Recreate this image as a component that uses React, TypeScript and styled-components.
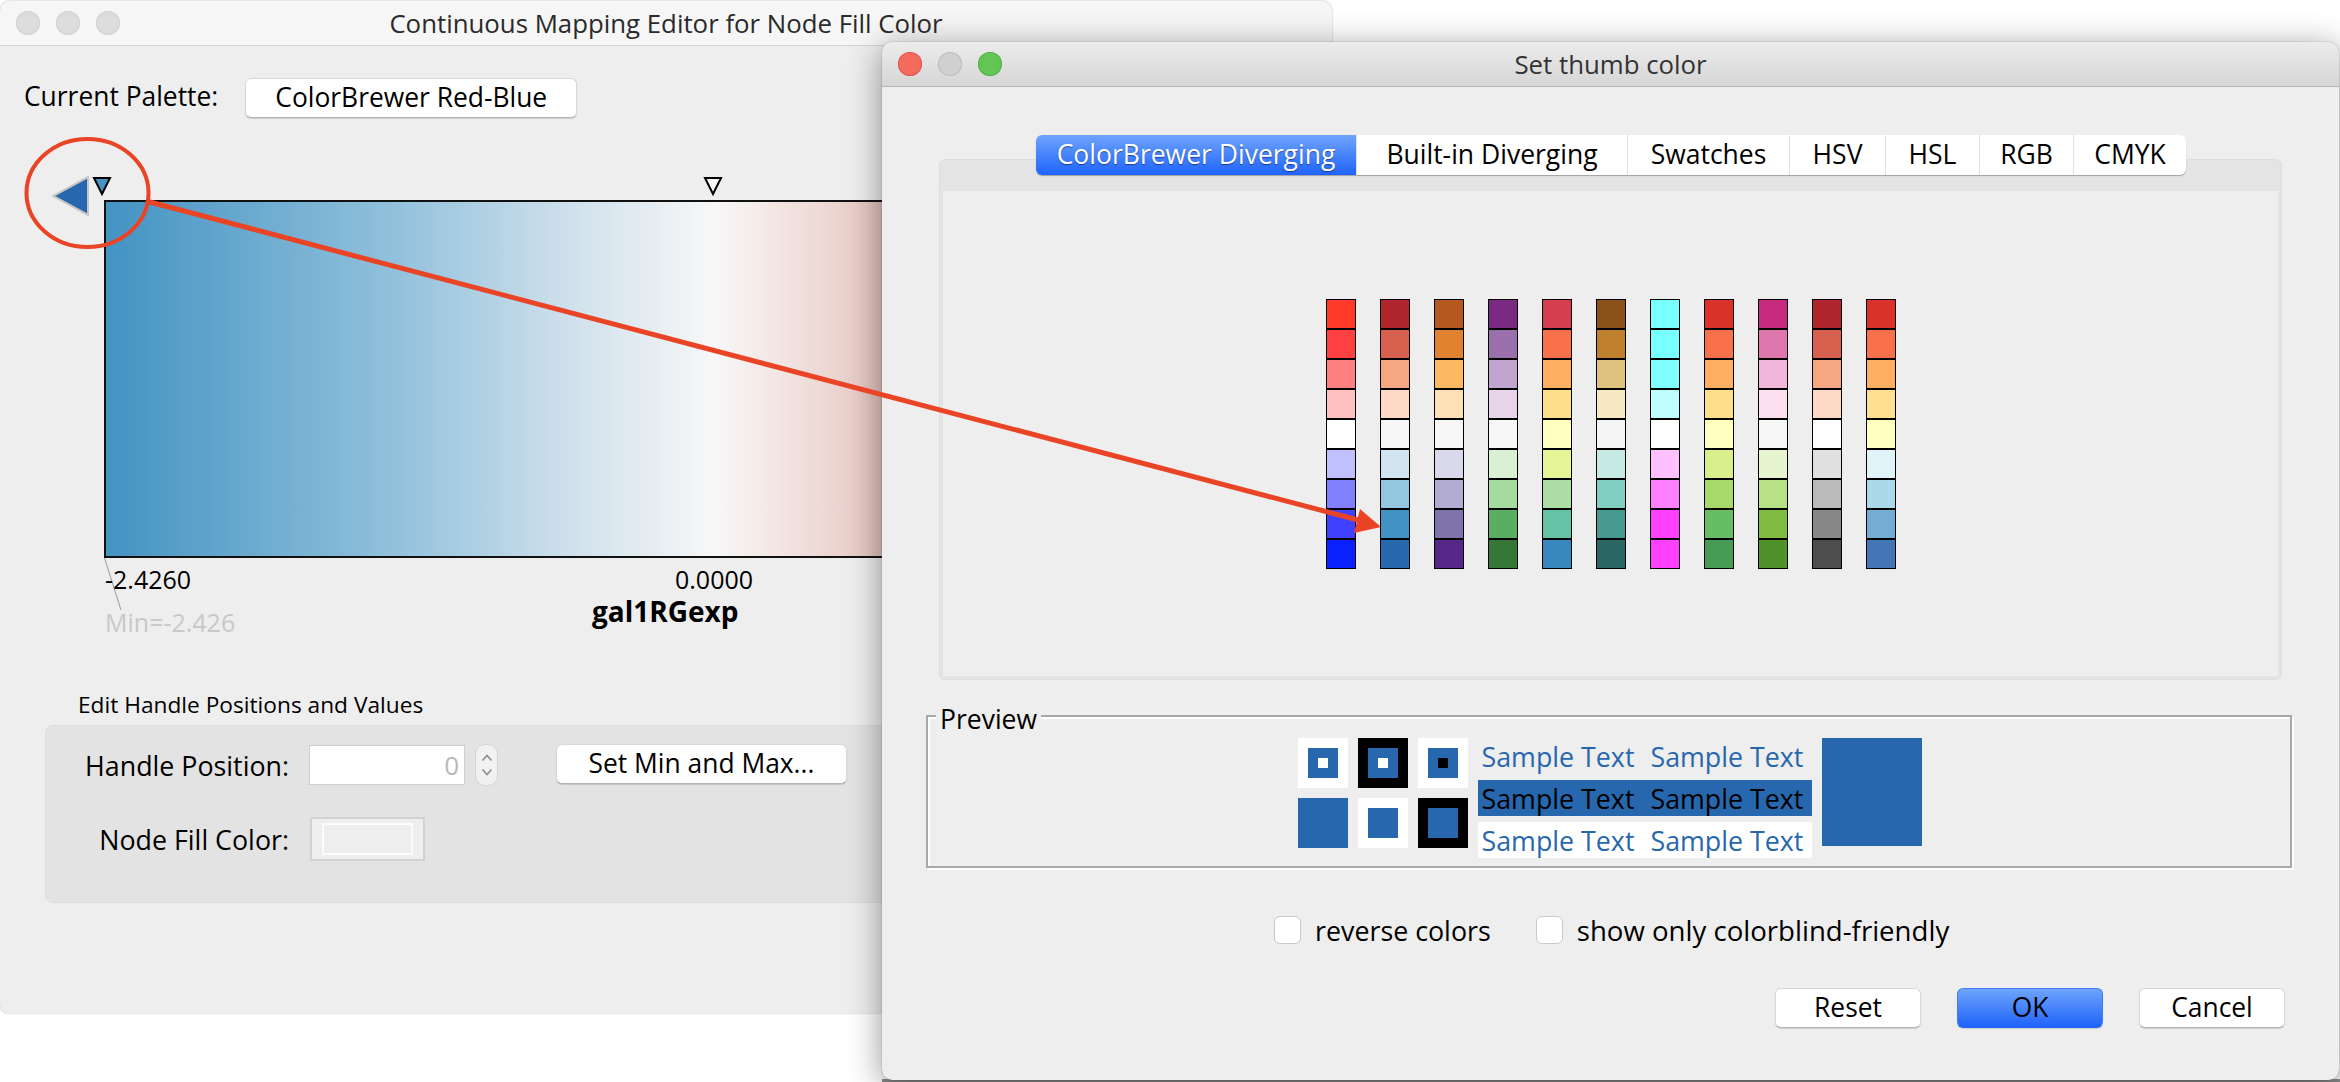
import React from "react";
import styled, { createGlobalStyle } from "styled-components";

const GlobalStyle = createGlobalStyle`
  html, body {
    margin: 0;
    padding: 0;
    background: #fff;
    overflow: hidden;
  }
  body {
    font-family: "Open Sans", "Noto Sans", sans-serif;
    color: #000;
  }
`;

const Desktop = styled.div`
  position: relative;
  width: 2340px;
  height: 1082px;
  overflow: hidden;
  background: #fff;
`;

const BackdropStrip = styled.div`
  position: absolute;
  left: 882px;
  right: 0;
  bottom: 0;
  height: 3px;
  background: #8c8c8c;
`;

const EditorWindow = styled.div`
  position: absolute;
  left: 0;
  top: 1px;
  width: 1332px;
  height: 1012px;
  display: flex;
  flex-direction: column;
  background: #eeeeee;
  border-radius: 10px 10px 8px 8px;
  box-shadow: 0 0 2px rgba(0, 0, 0, 0.35);
  overflow: hidden;
`;

const DialogWindow = styled.div`
  position: absolute;
  left: 882px;
  top: 42px;
  width: 1457px;
  height: 1038px;
  display: flex;
  flex-direction: column;
  background: #eeeeee;
  border-radius: 10px;
  box-shadow: 0 0 1px rgba(0, 0, 0, 0.6), 0 6px 34px rgba(0, 0, 0, 0.42);
`;

const TitleBar = styled.div<{ $active?: boolean }>`
  position: relative;
  flex: none;
  height: 44px;
  display: flex;
  align-items: center;
  justify-content: center;
  background: ${(p) =>
    p.$active ? "linear-gradient(#ececec, #d6d6d6)" : "#f6f6f6"};
  border-bottom: 1px solid ${(p) => (p.$active ? "#b5b5b5" : "#d4d4d4")};
  border-radius: 10px 10px 0 0;
  font-size: 25.8px;
  color: ${(p) => (p.$active ? "#333" : "#2a2a2a")};
`;

const Lights = styled.div`
  position: absolute;
  left: 16px;
  top: 10px;
  display: flex;
  gap: 16px;
`;

const Light = styled.span<{ $color: string; $edge: string }>`
  width: 24px;
  height: 24px;
  border-radius: 50%;
  background: ${(p) => p.$color};
  box-shadow: inset 0 0 0 1px ${(p) => p.$edge};
`;

const EditorBody = styled.div`
  flex: 1;
  display: flex;
  flex-direction: column;
`;

const PaletteRow = styled.div`
  display: flex;
  align-items: center;
  gap: 27px;
  margin: 32px 0 0 24px;
  font-size: 26.4px;
  height: 40px;
  line-height: 36px;
  > span {
    margin-top: -4px;
  }
`;

const MacButton = styled.button<{ $primary?: boolean; $w: number; $h?: number }>`
  flex: none;
  width: ${(p) => p.$w}px;
  height: ${(p) => p.$h ?? 40}px;
  padding: 0 0 3px;
  font: inherit;
  font-size: 26.4px;
  line-height: 34px;
  color: #000;
  border: 1px solid ${(p) => (p.$primary ? "#3f7ff5" : "#d8d8d8")};
  border-bottom-color: ${(p) => (p.$primary ? "#2a68f0" : "#b4b4b4")};
  border-radius: 6px;
  background: ${(p) =>
    p.$primary ? "linear-gradient(#6ea4fb, #1f63fb)" : "#ffffff"};
  box-shadow: 0 1px 1px rgba(0, 0, 0, 0.14);
`;

const GradientArea = styled.div`
  position: relative;
  height: 358px;
  margin: 82px 0 0 104px;
  width: 1228px;
  border: 2px solid #111;
  border-right: none;
  box-sizing: border-box;
  background: linear-gradient(
    90deg,
    #4393c3 0,
    #92c1dc 290px,
    #d1e1ec 470px,
    #f7f7f7 609px,
    #f3e6e3 670px,
    #ecd6d2 725px,
    #e4c2bd 778px,
    #d6604d 1228px
  );
`;

const Handle = styled.svg<{ $left: number }>`
  position: absolute;
  top: -26px;
  left: ${(p) => p.$left}px;
  width: 20px;
  height: 20px;
`;

const SelectedArrow = styled.svg`
  position: absolute;
  top: -26px;
  left: -54px;
  width: 38px;
  height: 40px;
`;

const AxisRow = styled.div`
  position: relative;
  margin-left: 104px;
  height: 38px;
  font-size: 25px;
  line-height: 42px;
`;

const AxisValue = styled.span<{ $left: number }>`
  position: absolute;
  left: ${(p) => p.$left}px;
  top: 0;
  white-space: nowrap;
`;

const TickLine = styled.svg`
  position: absolute;
  left: 0;
  top: 0;
  width: 20px;
  height: 54px;
`;

const CaptionRow = styled.div`
  display: flex;
  margin-left: 105px;
  height: 44px;
`;

const MinLabel = styled.span`
  font-size: 25px;
  color: #c8c8c8;
  line-height: 44px;
  width: 487px;
  padding-top: 4px;
`;

const AttrName = styled.span`
  font-size: 28px;
  font-weight: 700;
  line-height: 38px;
  margin-top: -4px;
`;

const GroupTitle = styled.div`
  margin: 50px 0 0 78px;
  font-size: 22.7px;
  line-height: 30px;
`;

const GroupPanel = styled.div`
  margin: 5px 0 0 45px;
  height: 178px;
  box-sizing: border-box;
  padding: 18px 0 0 0;
  display: flex;
  flex-direction: column;
  gap: 31px;
  background: #e3e3e3;
  border: 1px solid #dcdcdc;
  border-radius: 8px 0 0 8px;
`;

const FieldRow = styled.div`
  display: flex;
  align-items: center;
`;

const FieldLabel = styled.label`
  width: 243px;
  text-align: right;
  font-size: 26.8px;
  flex: none;
`;

const NumberBox = styled.div`
  width: 156px;
  height: 40px;
  margin-left: 20px;
  box-sizing: border-box;
  padding-right: 5px;
  background: #fff;
  border: 1px solid #cfcfcf;
  text-align: right;
  font-size: 26px;
  line-height: 38px;
  color: #b8b8b8;
`;

const Spinner = styled.div`
  width: 23px;
  height: 42px;
  margin-left: 10px;
  box-sizing: border-box;
  border: 1px solid #d4d4d4;
  border-radius: 10px;
  background: #f1f1f1;
  display: flex;
  flex-direction: column;
  align-items: center;
  justify-content: center;
  gap: 6px;
`;

const FieldButtonSlot = styled.div`
  margin-left: 58px;
  margin-top: -2px;
`;

const ColorWell = styled.div`
  width: 115px;
  height: 44px;
  margin-left: 21px;
  box-sizing: border-box;
  padding: 4px 10px;
  background: #eeeeee;
  border: 2px solid #d2d2d2;
`;

const ColorWellInner = styled.div`
  height: 100%;
  box-sizing: border-box;
  border: 2px solid #fbfbfb;
`;

const DialogBody = styled.div`
  flex: 1;
  display: flex;
  flex-direction: column;
`;

const TabPane = styled.div`
  position: relative;
  margin: 72px 57px 0 57px;
  height: 521px;
  box-sizing: border-box;
  padding: 31px 3px 3px;
  background: #e4e4e4;
  border: 1px solid #dedede;
  border-radius: 6px;
`;

const Tabs = styled.div`
  position: absolute;
  top: -25px;
  left: 96px;
  display: flex;
  height: 40px;
  background: #fff;
  border-radius: 6px;
  box-shadow: 0 1px 1px rgba(0, 0, 0, 0.3);
  overflow: hidden;
`;

const Tab = styled.div<{ $active?: boolean; $w: number }>`
  width: ${(p) => p.$w}px;
  box-sizing: border-box;
  display: flex;
  align-items: center;
  justify-content: center;
  padding-bottom: 2px;
  font-size: 26.5px;
  white-space: nowrap;
  color: ${(p) => (p.$active ? "#fff" : "#000")};
  background: ${(p) =>
    p.$active ? "linear-gradient(#6ea4fb, #1f63fb)" : "transparent"};
  border-left: ${(p) => (p.$active ? "none" : "1px solid #e0e0e0")};
  text-shadow: ${(p) => (p.$active ? "0 1px 1px rgba(0,0,60,.5)" : "none")};
`;

const TabContent = styled.div`
  height: 100%;
  display: flex;
  justify-content: center;
  align-items: flex-start;
  background: #eeeeee;
`;

const SwatchGrid = styled.div`
  display: flex;
  gap: 24px;
  margin: 108px 0 0 0;
`;

const SwatchColumn = styled.div`
  display: flex;
  flex-direction: column;
`;

const Swatch = styled.div<{ $color: string }>`
  width: 30px;
  height: 30px;
  box-sizing: border-box;
  border: 1px solid #000;
  background: ${(p) => p.$color};
`;

const PreviewBox = styled.fieldset`
  position: relative;
  margin: 35px 47px 0 44px;
  height: 153px;
  box-sizing: border-box;
  padding: 0;
  border: 2px solid #a8a8a8;
  box-shadow: 2px 2px 0 #fff, inset 2px 2px 0 #fff;
  display: flex;
  justify-content: center;
`;

const PreviewLegend = styled.span`
  position: absolute;
  left: 8px;
  top: -12px;
  padding: 0 4px;
  background: #eeeeee;
  font-size: 26.5px;
  line-height: 28px;
`;

const PreviewInner = styled.div`
  display: flex;
  gap: 10px;
  padding-top: 21px;
  margin-left: 1px;
`;

const Squares = styled.div`
  display: grid;
  grid-template-columns: repeat(3, 50px);
  grid-auto-rows: 50px;
  gap: 10px;
`;

const Square = styled.div<{ $outer: string; $inner: string; $dot?: string }>`
  background: ${(p) => p.$outer};
  display: flex;
  align-items: center;
  justify-content: center;
  > i {
    width: 30px;
    height: 30px;
    display: flex;
    align-items: center;
    justify-content: center;
    background: ${(p) => p.$inner};
  }
  > i > b {
    display: ${(p) => (p.$dot ? "block" : "none")};
    width: 10px;
    height: 10px;
    background: ${(p) => p.$dot};
  }
`;

const SampleStack = styled.div`
  display: flex;
  flex-direction: column;
  gap: 6px;
  width: 334px;
`;

const SampleRow = styled.div<{ $bg: string; $fg: string }>`
  height: 36px;
  display: flex;
  gap: 16px;
  padding-left: 4px;
  align-items: center;
  background: ${(p) => p.$bg};
  color: ${(p) => p.$fg};
  font-size: 26.8px;
  white-space: nowrap;
`;

const BigSwatch = styled.div`
  width: 100px;
  height: 108px;
  background: #2767ad;
`;

const OptionsRow = styled.div`
  display: flex;
  margin: 47px 0 0 392px;
  height: 30px;
  align-items: center;
  font-size: 26.8px;
  white-space: nowrap;
`;

const CheckBox = styled.span`
  width: 27px;
  height: 28px;
  box-sizing: border-box;
  flex: none;
  background: #fff;
  border: 1px solid #c9c9c9;
  border-radius: 6px;
  margin-right: 14px;
`;

const ColorblindLabel = styled.span`
  font-size: 27.6px;
`;

const OptionGap = styled.span`
  width: 45px;
`;

const ButtonRow = styled.div`
  display: flex;
  justify-content: flex-end;
  gap: 36px;
  margin: 43px 54px 0 0;
`;

const Overlay = styled.svg`
  position: absolute;
  left: 0;
  top: 0;
  width: 2340px;
  height: 1082px;
  pointer-events: none;
`;

const palettes = [
  ["#ff3a28", "#ff4040", "#ff8080", "#ffc0c0", "#ffffff", "#c0c0ff", "#8080ff", "#4040ff", "#0a20ff"],
  ["#b1252e", "#d7614e", "#f5a782", "#fed9c6", "#f7f7f7", "#d1e5f0", "#93c6df", "#4293c3", "#2868ad"],
  ["#b35920", "#e08230", "#fdb863", "#fee0b6", "#f7f7f7", "#d8daeb", "#b2abd2", "#8073ac", "#542788"],
  ["#7a2a82", "#9970ab", "#c2a5cf", "#e7d4e8", "#f7f7f7", "#d9f0d3", "#a6dba0", "#5aae61", "#367737"],
  ["#d53e4f", "#f8714a", "#fdae61", "#fee08b", "#ffffbf", "#e6f598", "#abdda4", "#66c2a5", "#3a87bf"],
  ["#8c5118", "#bf812d", "#dfc27d", "#f6e8c3", "#f5f5f5", "#c7eae5", "#80cdc1", "#469a8f", "#2a6662"],
  ["#78ffff", "#78ffff", "#80ffff", "#c0ffff", "#ffffff", "#ffc0ff", "#ff80ff", "#ff40ff", "#ff40ff"],
  ["#d93229", "#f8714a", "#fdae61", "#fee08b", "#ffffbf", "#d9ef8b", "#a6d96a", "#66bd63", "#479b54"],
  ["#c52a7d", "#de77ae", "#f1b6da", "#fde0ef", "#f7f7f7", "#e6f5d0", "#b8e186", "#7fbc41", "#4f922a"],
  ["#b1252e", "#d7614e", "#f5a782", "#fed9c6", "#ffffff", "#e0e0e0", "#bababa", "#878787", "#4d4d4d"],
  ["#d93229", "#f8714a", "#fdae61", "#fee090", "#ffffbf", "#e0f3f8", "#abd9e9", "#74add1", "#4575b4"],
];

const tabs = [
  { label: "ColorBrewer Diverging", w: 320, active: true },
  { label: "Built-in Diverging", w: 271 },
  { label: "Swatches", w: 162 },
  { label: "HSV", w: 96 },
  { label: "HSL", w: 94 },
  { label: "RGB", w: 94 },
  { label: "CMYK", w: 113 },
];

const BLUE = "#2767ad";

const squares = [
  { outer: "#fff", inner: BLUE, dot: "#fff" },
  { outer: "#000", inner: BLUE, dot: "#fff" },
  { outer: "#fff", inner: BLUE, dot: "#000" },
  { outer: BLUE, inner: BLUE },
  { outer: "#fff", inner: BLUE },
  { outer: "#000", inner: BLUE },
];

const sampleRows = [
  { bg: "transparent", fg: BLUE },
  { bg: BLUE, fg: "#000" },
  { bg: "#fff", fg: BLUE },
];

function HandleMark({ left, fill }: { left: number; fill: string }) {
  return (
    <Handle $left={left} viewBox="0 0 20 20">
      <path d="M2 2 H18 L10 18 Z" fill={fill} stroke="#000" strokeWidth="2" />
    </Handle>
  );
}

function Chevron({ up }: { up?: boolean }) {
  return (
    <svg width="12" height="8" viewBox="0 0 12 8">
      <path
        d={up ? "M1.5 6.5 L6 1.5 L10.5 6.5" : "M1.5 1.5 L6 6.5 L10.5 1.5"}
        fill="none"
        stroke="#8c8c8c"
        strokeWidth="1.6"
      />
    </svg>
  );
}

export default function App() {
  return (
    <Desktop>
      <GlobalStyle />
      <BackdropStrip />

      <EditorWindow>
        <TitleBar>
          <Lights>
            <Light $color="#dcdcdc" $edge="#d0d0d0" />
            <Light $color="#dcdcdc" $edge="#d0d0d0" />
            <Light $color="#dcdcdc" $edge="#d0d0d0" />
          </Lights>
          Continuous Mapping Editor for Node Fill Color
        </TitleBar>
        <EditorBody>
          <PaletteRow>
            <span>Current Palette:</span>
            <MacButton $w={332}>ColorBrewer Red-Blue</MacButton>
          </PaletteRow>

          <GradientArea>
            <SelectedArrow viewBox="0 0 38 40">
              <path d="M36 1 V39 L1 20 Z" fill={BLUE} stroke="#c6c6c6" strokeWidth="2" />
            </SelectedArrow>
            <HandleMark left={-14} fill="#4393c3" />
            <HandleMark left={597} fill="#f7f7f7" />
          </GradientArea>

          <AxisRow>
            <TickLine viewBox="0 0 20 54">
              <path d="M0.5 0 L17 52" stroke="#9a9a9a" strokeWidth="1" fill="none" />
            </TickLine>
            <AxisValue $left={1}>-2.4260</AxisValue>
            <AxisValue $left={571}>0.0000</AxisValue>
          </AxisRow>

          <CaptionRow>
            <MinLabel>Min=-2.426</MinLabel>
            <AttrName>gal1RGexp</AttrName>
          </CaptionRow>

          <GroupTitle>Edit Handle Positions and Values</GroupTitle>
          <GroupPanel>
            <FieldRow>
              <FieldLabel>Handle Position:</FieldLabel>
              <NumberBox>0</NumberBox>
              <Spinner>
                <Chevron up />
                <Chevron />
              </Spinner>
              <FieldButtonSlot>
                <MacButton $w={291}>Set Min and Max...</MacButton>
              </FieldButtonSlot>
            </FieldRow>
            <FieldRow>
              <FieldLabel>Node Fill Color:</FieldLabel>
              <ColorWell>
                <ColorWellInner />
              </ColorWell>
            </FieldRow>
          </GroupPanel>
        </EditorBody>
      </EditorWindow>

      <DialogWindow>
        <TitleBar $active>
          <Lights>
            <Light $color="#f46b5e" $edge="#e2564a" />
            <Light $color="#d0d0d0" $edge="#bcbcbc" />
            <Light $color="#62c655" $edge="#52b246" />
          </Lights>
          Set thumb color
        </TitleBar>
        <DialogBody>
          <TabPane>
            <Tabs>
              {tabs.map((t) => (
                <Tab key={t.label} $active={t.active} $w={t.w}>
                  {t.label}
                </Tab>
              ))}
            </Tabs>
            <TabContent>
              <SwatchGrid>
                {palettes.map((column, i) => (
                  <SwatchColumn key={i}>
                    {column.map((color, j) => (
                      <Swatch key={j} $color={color} />
                    ))}
                  </SwatchColumn>
                ))}
              </SwatchGrid>
            </TabContent>
          </TabPane>

          <PreviewBox>
            <PreviewLegend>Preview</PreviewLegend>
            <PreviewInner>
              <Squares>
                {squares.map((s, i) => (
                  <Square key={i} $outer={s.outer} $inner={s.inner} $dot={s.dot}>
                    <i>
                      <b />
                    </i>
                  </Square>
                ))}
              </Squares>
              <SampleStack>
                {sampleRows.map((r, i) => (
                  <SampleRow key={i} $bg={r.bg} $fg={r.fg}>
                    <span>Sample Text</span>
                    <span>Sample Text</span>
                  </SampleRow>
                ))}
              </SampleStack>
              <BigSwatch />
            </PreviewInner>
          </PreviewBox>

          <OptionsRow>
            <CheckBox />
            <span>reverse colors</span>
            <OptionGap />
            <CheckBox />
            <ColorblindLabel>show only colorblind-friendly</ColorblindLabel>
          </OptionsRow>

          <ButtonRow>
            <MacButton $w={146}>Reset</MacButton>
            <MacButton $w={146} $primary>
              OK
            </MacButton>
            <MacButton $w={146}>Cancel</MacButton>
          </ButtonRow>
        </DialogBody>
      </DialogWindow>

      <Overlay viewBox="0 0 2340 1082">
        <ellipse cx="87.5" cy="193" rx="61" ry="54" fill="none" stroke="#ea4426" strokeWidth="4" />
        <path d="M146 201 L1362 521" stroke="#ea4426" strokeWidth="5" fill="none" />
        <path d="M1381 527 L1360 509 L1354 533 Z" fill="#ea4426" />
      </Overlay>
    </Desktop>
  );
}
